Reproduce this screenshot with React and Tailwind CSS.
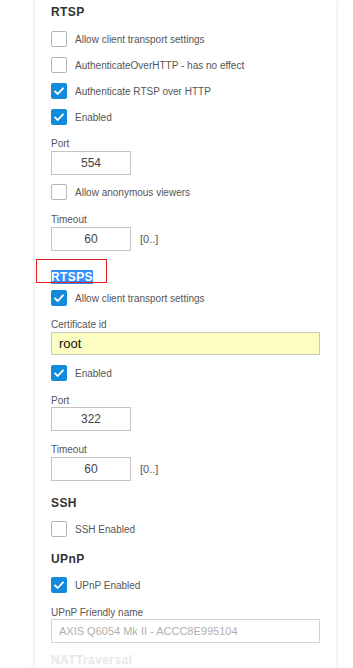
import React from "react";

function Check({ checked }) {
  return checked ? (
    <span className="flex h-[16px] w-[16px] shrink-0 items-center justify-center rounded-[2px] bg-[#128bdc]">
      <svg width="12" height="12" viewBox="0 0 12 12" fill="none">
        <path d="M2 6.3 L4.8 9 L10 3.3" stroke="white" strokeWidth="1.8" strokeLinecap="round" strokeLinejoin="round" />
      </svg>
    </span>
  ) : (
    <span className="h-[16px] w-[16px] shrink-0 rounded-[2px] border border-[#b4b4b4] bg-white" />
  );
}

function CB({ checked, label, mt }) {
  return (
    <div className={`flex h-[16px] items-center gap-[8px] ${mt}`}>
      <Check checked={checked} />
      <span className="text-[10px] leading-[13px] text-[#555]">{label}</span>
    </div>
  );
}

function Label({ children, mt }) {
  return <div className={`h-[13px] text-[10px] leading-[13px] text-[#555] ${mt}`}>{children}</div>;
}

function SmallInput({ value, mt, range }) {
  return (
    <div className={`flex items-center ${mt}`}>
      <div className="flex h-[24px] w-[80px] items-center justify-center border border-[#c4c4c4] bg-white text-[12px] text-[#444]">
        {value}
      </div>
      {range && <span className="ml-[9px] text-[11px] text-[#555]">[0..]</span>}
    </div>
  );
}

function Heading({ children, mt }) {
  return <div className={`h-[14px] text-[12px] font-bold leading-[14px] tracking-[0.4px] text-[#333] ${mt}`}>{children}</div>;
}

export default function App() {
  return (
    <div className="min-h-[668px] w-[353px] overflow-hidden bg-white" style={{ fontFamily: '"Liberation Sans", Arial, sans-serif' }}>
      <div className="ml-[35px] h-[668px] w-[301px] bg-white pl-[16px] shadow-[0_0_4px_rgba(0,0,0,0.14)]">
        <div className="pt-[5px]">
          <Heading mt="">RTSP</Heading>
          <CB mt="mt-[12px]" label="Allow client transport settings" />
          <CB mt="mt-[10px]" label="AuthenticateOverHTTP - has no effect" />
          <CB mt="mt-[10px]" checked label="Authenticate RTSP over HTTP" />
          <CB mt="mt-[10px]" checked label="Enabled" />
          <Label mt="mt-[12px]">Port</Label>
          <SmallInput mt="mt-[1px]" value="554" />
          <CB mt="mt-[9px]" label="Allow anonymous viewers" />
          <Label mt="mt-[13px]">Timeout</Label>
          <SmallInput mt="mt-[1px]" value="60" range />

          <div className="relative mt-[13px] h-[14px]">
            <span className="bg-[#3390ff] text-[12px] font-bold leading-[14px] tracking-[0.4px] text-white">RTSPS</span>
            <span className="pointer-events-none absolute left-[-15px] top-[-5px] h-[24px] w-[71px] border border-[#e02020]" />
          </div>
          <CB mt="mt-[12px]" checked label="Allow client transport settings" />
          <Label mt="mt-[12px]">Certificate id</Label>
          <div className="mt-[1px] flex h-[23px] w-[269px] items-center border border-[#c8c8c0] bg-[#fbfdc3] pl-[7px] text-[13px] text-[#111]">
            root
          </div>
          <CB mt="mt-[10px]" checked label="Enabled" />
          <Label mt="mt-[13px]">Port</Label>
          <SmallInput mt="" value="322" />
          <Label mt="mt-[12px]">Timeout</Label>
          <SmallInput mt="mt-[1px]" value="60" range />

          <Heading mt="mt-[15px]">SSH</Heading>
          <CB mt="mt-[11px]" label="SSH Enabled" />
          <Heading mt="mt-[15px]">UPnP</Heading>
          <CB mt="mt-[11px]" checked label="UPnP Enabled" />
          <Label mt="mt-[13px]">UPnP Friendly name</Label>
          <div className="flex h-[24px] w-[269px] items-center border border-[#d4d4d4] bg-white pl-[7px] text-[11px] text-[#b0b0b0]">
            AXIS Q6054 Mk II - ACCC8E995104
          </div>
          <div className="mt-[10px] h-[14px] text-[12px] font-bold leading-[14px] tracking-[0.4px] text-[#e8e8e8]">NATTraversal</div>
        </div>
      </div>
    </div>
  );
}
